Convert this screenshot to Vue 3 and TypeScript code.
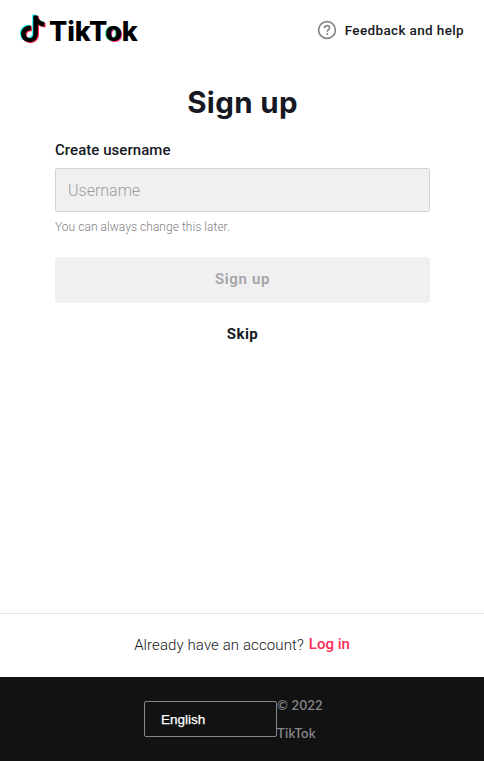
<script setup lang="ts">
import { ref } from 'vue'

const username = ref('')
const language = 'English'
const notePath =
  'M12.525.02c1.31-.02 2.61-.01 3.91-.02.08 1.53.63 3.09 1.75 4.17 1.12 1.11 2.7 1.62 4.24 1.79v4.03c-1.44-.05-2.89-.35-4.2-.97-.57-.26-1.1-.59-1.62-.93-.01 2.92.01 5.84-.02 8.75-.08 1.4-.54 2.79-1.35 3.94-1.31 1.92-3.58 3.17-5.91 3.21-1.43.08-2.86-.31-4.08-1.03-2.02-1.19-3.44-3.37-3.65-5.71-.02-.5-.03-1-.01-1.49.18-1.9 1.12-3.72 2.58-4.96 1.66-1.44 3.98-2.13 6.15-1.72.02 1.48-.04 2.96-.04 4.44-.99-.32-2.15-.23-3.02.37-.63.41-1.11 1.04-1.36 1.75-.21.51-.15 1.07-.14 1.61.24 1.64 1.82 3.02 3.5 2.87 1.12-.01 2.19-.66 2.77-1.61.19-.33.4-.67.41-1.06.1-1.79.06-3.57.07-5.36.01-4.03-.01-8.05.02-12.07z'
</script>

<template>
  <div class="page">
    <header class="header">
      <div class="brand">
        <svg class="logo" width="28" height="32" viewBox="0 0 28 32" aria-hidden="true">
          <path :d="notePath" fill="#25f4ee" transform="translate(-1.8 2.6) scale(1.12)" />
          <path :d="notePath" fill="#fe2c55" transform="translate(0.4 4.3) scale(1.12)" />
          <path :d="notePath" fill="#000" transform="translate(-.7 3.4) scale(1.12)" />
        </svg>
        <span class="wordmark">TikT<span class="glow">o</span>k</span>
      </div>
      <a class="help">
        <svg width="20" height="20" viewBox="0 0 20 20" fill="none" stroke="#86878b" stroke-width="1.7">
          <circle cx="10" cy="10" r="8.4" />
          <path d="M7.4 8.2c0-1.5 1.1-2.5 2.6-2.5s2.6.9 2.6 2.3c0 1.9-2.5 1.9-2.5 3.7" />
          <path d="M10.1 12.9v1.8" />
        </svg>
        <span class="help-text">Feedback and help</span>
      </a>
    </header>

    <main class="main">
      <h1 class="title"><span>Sign up</span></h1>
      <label class="label" for="username"><span>Create username</span></label>
      <input id="username" v-model="username" class="input" type="text" placeholder="Username" />
      <p class="hint"><span>You can always change this later.</span></p>
      <button class="submit" disabled><span>Sign up</span></button>
      <button class="skip"><span>Skip</span></button>
    </main>

    <section class="login">
      <span class="question">Already have an account?</span>
      <a class="login-link">Log in</a>
    </section>

    <footer class="footer">
      <div class="language">{{ language }}</div>
      <div class="copyright"><span>© 2022</span><span>TikTok</span></div>
    </footer>
  </div>
</template>

<style>
body {
  margin: 0;
  background: #fff;
}
</style>

<style scoped>
.page {
  display: flex;
  flex-direction: column;
  box-sizing: border-box;
  height: 761px;
  overflow: hidden;
  color: #161823;
  font-family: Roboto, sans-serif;
}
.header {
  display: flex;
  justify-content: space-between;
  align-items: center;
  height: 60px;
  padding: 0 20px;
}
.brand {
  display: flex;
  align-items: center;
  gap: 1px;
}
.logo {
  display: block;
  overflow: visible;
  margin-top: -4px;
}
.wordmark {
  margin-top: 4px;
  color: #000;
  font: 800 27px/32px Inter, sans-serif;
  letter-spacing: -0.1px;
}
.glow {
  text-shadow: -1.2px -0.5px #25f4ee, 1.2px 0.7px #fe2c55;
}
.help {
  display: flex;
  align-items: center;
  gap: 7.5px;
}
.help-text {
  margin-top: -1px;
  font: 500 13.5px/20px Roboto, sans-serif;
  letter-spacing: 0.36px;
}
.main {
  display: flex;
  flex-direction: column;
  flex: 1;
  padding: 21px 54px 0 55px;
}
.title {
  margin: 0;
  font: 700 29.5px/42px Inter, sans-serif;
  letter-spacing: 0.35px;
  text-align: center;
}
.label {
  margin-top: 16px;
  font-size: 15px;
  font-weight: 500;
  line-height: 22px;
  letter-spacing: 0.05px;
}
.input {
  box-sizing: border-box;
  height: 44px;
  margin: 7px 0 0;
  padding: 0 12px;
  border: 1px solid #d3d3d5;
  border-radius: 2px;
  outline: none;
  background: #f0f0f0;
  font: 300 16px Roboto, sans-serif;
  letter-spacing: 0;
}
.input::placeholder {
  color: #9b9ca1;
  opacity: 1;
}
.hint {
  margin: 6px 0 0;
  color: #7f8086;
  font: 300 12px/18px Roboto, sans-serif;
  letter-spacing: 0.04px;
}
.submit {
  height: 46px;
  margin-top: 21px;
  padding: 0 0 2px;
  border: 0;
  border-radius: 4px;
  background: #f0f0f0;
  color: #a3a4a8;
  font: 600 15px Roboto, sans-serif;
  letter-spacing: 0.65px;
}
.skip {
  align-self: center;
  height: 24px;
  margin-top: 19px;
  padding: 0;
  border: 0;
  background: none;
  color: #161823;
  font: 700 15px/24px Roboto, sans-serif;
  letter-spacing: 0.4px;
}
.login {
  display: flex;
  justify-content: center;
  gap: 5px;
  box-sizing: border-box;
  height: 64px;
  padding-top: 19px;
  border-top: 1px solid #e3e3e4;
  font-size: 15px;
  line-height: 24px;
}
.question {
  font-weight: 300;
  letter-spacing: 0.1px;
}
.login-link {
  margin-top: -1px;
  color: #fe2c55;
  font-weight: 500;
}
.footer {
  display: flex;
  align-items: flex-start;
  box-sizing: border-box;
  height: 84px;
  padding: 15px 0 0 144px;
  background: #121212;
}
.language {
  box-sizing: border-box;
  width: 133px;
  height: 36px;
  margin-top: 9px;
  padding-left: 16px;
  border: 1px solid #86878b;
  border-radius: 2px;
  color: #fff;
  font: 500 13.5px/35px "Liberation Sans", sans-serif;
  -webkit-text-stroke: 0.25px #fff;
}
.copyright {
  display: flex;
  flex-direction: column;
  margin-top: -1px;
  color: #86878b;
  font: 600 13px/28px Lato, sans-serif;
  letter-spacing: 0.3px;
}
</style>
